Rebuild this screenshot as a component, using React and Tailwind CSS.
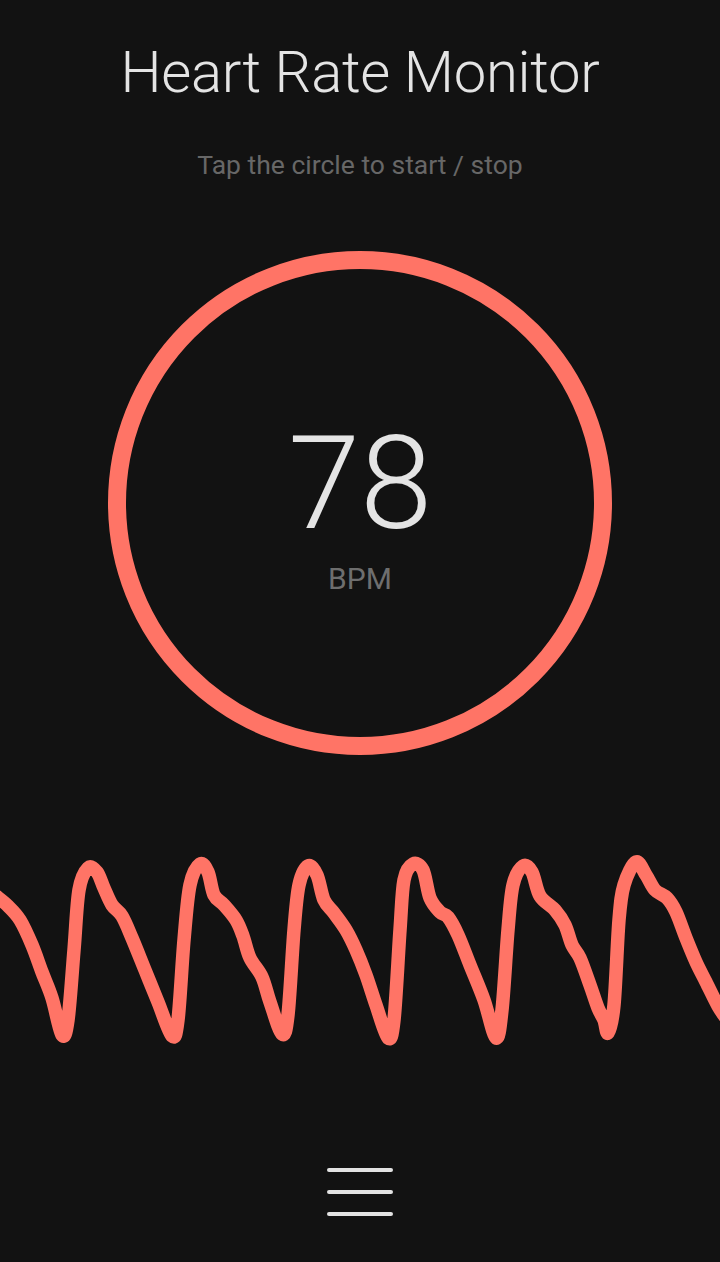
import React from "react"

const WavePoints = [
  [-4, 896], [8, 906], [20, 920], [32, 945], [42, 972], [52, 998], [62, 1035],
  [68, 1020], [74, 950], [79, 890], [88, 868], [97, 872], [104, 888], [112, 905],
  [122, 916], [132, 938], [145, 970], [158, 1002], [172, 1036], [178, 1020],
  [184, 940], [190, 885], [200, 864], [208, 872], [214, 895], [224, 905],
  [236, 920], [243, 936], [250, 958], [262, 977], [270, 1002], [282, 1034],
  [288, 1015], [294, 930], [299, 885], [308, 866], [317, 875], [324, 900],
  [334, 913], [346, 930], [356, 950], [366, 975], [376, 1005], [388, 1038],
  [394, 1020], [400, 930], [404, 880], [413, 864], [423, 870], [430, 898],
  [440, 912], [448, 917], [458, 935], [470, 965], [484, 1000], [496, 1038],
  [502, 1010], [508, 930], [513, 885], [523, 866], [532, 872], [540, 896],
  [555, 910], [565, 925], [572, 945], [580, 958], [590, 985], [598, 1008],
  [604, 1020], [608, 1033], [614, 1005], [619, 920], [624, 885], [636, 862],
  [646, 875], [655, 890], [667, 898], [676, 912], [686, 938], [696, 962],
  [706, 982], [718, 1006], [726, 1018]
];

const smoothPath = pts => {
  let d = `M ${ pts[0][0] } ${ pts[0][1] }`;
  for (let i = 0; i < pts.length - 1; i++) {
    const p0 = pts[i - 1] || pts[i];
    const p1 = pts[i];
    const p2 = pts[i + 1];
    const p3 = pts[i + 2] || p2;
    const c1x = p1[0] + (p2[0] - p0[0]) / 6;
    const c1y = p1[1] + (p2[1] - p0[1]) / 6;
    const c2x = p2[0] - (p3[0] - p1[0]) / 6;
    const c2y = p2[1] - (p3[1] - p1[1]) / 6;
    d += ` C ${ c1x } ${ c1y } ${ c2x } ${ c2y } ${ p2[0] } ${ p2[1] }`;
  }
  return d;
}

const PulseWave = () => {
  const d = React.useMemo(() => smoothPath(WavePoints), []);
  return (
    <svg className="block w-[720px] h-[240px]" viewBox="0 820 720 240">
      <path d={ d } fill="none" stroke="#ff7466" strokeWidth="13.5"
        strokeLinecap="round" strokeLinejoin="round"/>
    </svg>
  )
}

const MenuButton = () => (
  <button className="flex flex-col gap-[18px] py-0">
    <span className="block w-[66px] h-[4px] rounded-full bg-[#e2e2e2]"/>
    <span className="block w-[66px] h-[4px] rounded-full bg-[#e2e2e2]"/>
    <span className="block w-[66px] h-[4px] rounded-full bg-[#e2e2e2]"/>
  </button>
)

const App = () => {
  return (
    <div className="min-h-[1262px] bg-[#121212] flex flex-col items-center font-['Roboto',sans-serif] overflow-hidden">
      <h1 className="pt-[36px] text-[58px] leading-[72px] tracking-[-0.3px] font-light text-[#e4e4e4]">
        Heart Rate Monitor
      </h1>
      <p className="mt-[41px] text-[26.5px] leading-[32px] text-[#676767]">
        Tap the circle to start / stop
      </p>

      <div className="mt-[70px] w-[504px] h-[504px] rounded-full border-[18px] border-[#ff7466] flex flex-col items-center justify-center pt-[8px] cursor-pointer">
        <div className="text-[130px] leading-[130px] font-light text-[#e4e4e4]">78</div>
        <div className="mt-[14px] text-[30px] leading-[32px] text-[#6e6e6e]">BPM</div>
      </div>

      <div className="mt-[65px]">
        <PulseWave/>
      </div>

      <div className="mt-[108px]">
        <MenuButton/>
      </div>
    </div>
  )
}

export default App;
